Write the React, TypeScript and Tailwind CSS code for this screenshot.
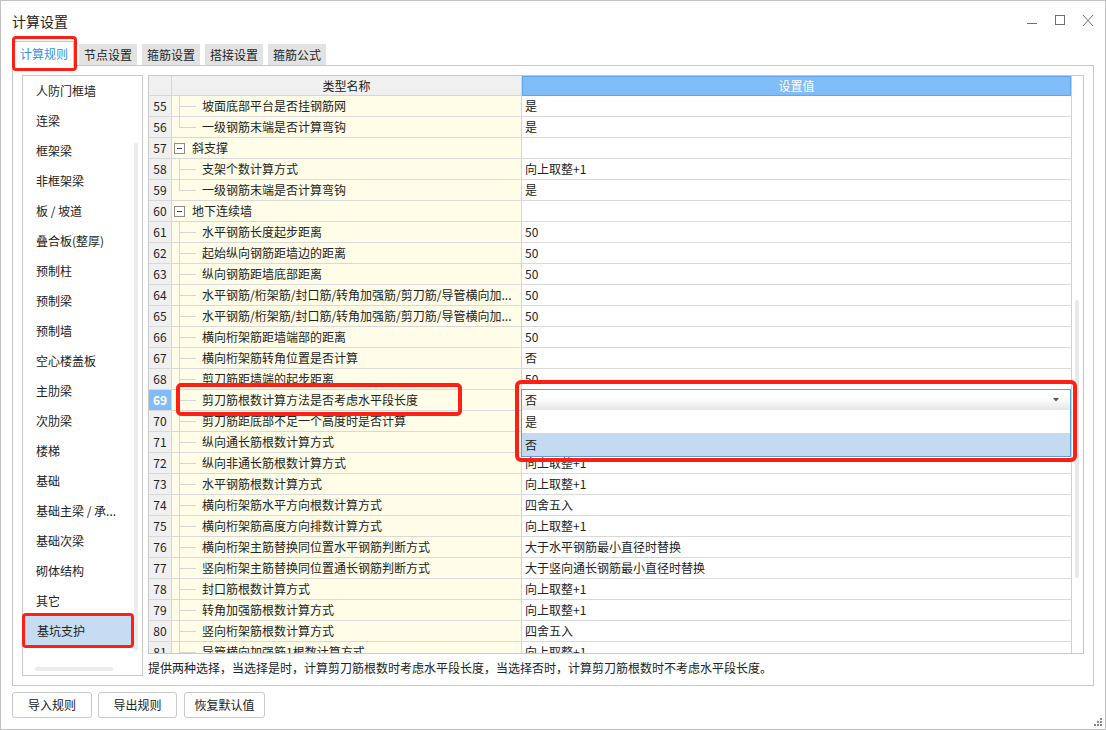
import React from 'react';

type RowData = {
	n: number;
	name: string;
	value: string;
	group?: boolean;
	last?: boolean;
};

// values of rows 70/71 sit under the open dropdown, so they are left empty
const rows: RowData[] = [
	{ n: 55, name: '坡面底部平台是否挂钢筋网', value: '是' },
	{ n: 56, name: '一级钢筋末端是否计算弯钩', value: '是', last: true },
	{ n: 57, name: '斜支撑', value: '', group: true },
	{ n: 58, name: '支架个数计算方式', value: '向上取整+1' },
	{ n: 59, name: '一级钢筋末端是否计算弯钩', value: '是', last: true },
	{ n: 60, name: '地下连续墙', value: '', group: true },
	{ n: 61, name: '水平钢筋长度起步距离', value: '50' },
	{ n: 62, name: '起始纵向钢筋距墙边的距离', value: '50' },
	{ n: 63, name: '纵向钢筋距墙底部距离', value: '50' },
	{ n: 64, name: '水平钢筋/桁架筋/封口筋/转角加强筋/剪刀筋/导管横向加...', value: '50' },
	{ n: 65, name: '水平钢筋/桁架筋/封口筋/转角加强筋/剪刀筋/导管横向加...', value: '50' },
	{ n: 66, name: '横向桁架筋距墙端部的距离', value: '50' },
	{ n: 67, name: '横向桁架筋转角位置是否计算', value: '否' },
	{ n: 68, name: '剪刀筋距墙端的起步距离', value: '50' },
	{ n: 69, name: '剪刀筋根数计算方法是否考虑水平段长度', value: '' },
	{ n: 70, name: '剪刀筋距底部不足一个高度时是否计算', value: '' },
	{ n: 71, name: '纵向通长筋根数计算方式', value: '' },
	{ n: 72, name: '纵向非通长筋根数计算方式', value: '向上取整+1' },
	{ n: 73, name: '水平钢筋根数计算方式', value: '向上取整+1' },
	{ n: 74, name: '横向桁架筋水平方向根数计算方式', value: '四舍五入' },
	{ n: 75, name: '横向桁架筋高度方向排数计算方式', value: '向上取整+1' },
	{ n: 76, name: '横向桁架主筋替换同位置水平钢筋判断方式', value: '大于水平钢筋最小直径时替换' },
	{ n: 77, name: '竖向桁架主筋替换同位置通长钢筋判断方式', value: '大于竖向通长钢筋最小直径时替换' },
	{ n: 78, name: '封口筋根数计算方式', value: '向上取整+1' },
	{ n: 79, name: '转角加强筋根数计算方式', value: '向上取整+1' },
	{ n: 80, name: '竖向桁架筋根数计算方式', value: '四舍五入' },
	{ n: 81, name: '导管横向加强筋1根数计算方式', value: '向上取整+1' },
];

const listItems = [
	'人防门框墙',
	'连梁',
	'框架梁',
	'非框架梁',
	'板 / 坡道',
	'叠合板(整厚)',
	'预制柱',
	'预制梁',
	'预制墙',
	'空心楼盖板',
	'主肋梁',
	'次肋梁',
	'楼梯',
	'基础',
	'基础主梁 / 承...',
	'基础次梁',
	'砌体结构',
	'其它',
	'基坑支护',
];

const tabs = ['计算规则', '节点设置', '箍筋设置', '搭接设置', '箍筋公式'];

const WindowControls = () => (
	<svg width="70" height="16" viewBox="0 0 70 16" className="ml-auto mr-[10px]" fill="none" stroke="#6f6f6f" strokeWidth="1">
		<path d="M2 10.5H12" />
		<rect x="30.5" y="2.5" width="9" height="9" />
		<path d="M58 2L68 13M68 2L58 13" />
	</svg>
);

const Grip = () => (
	<svg width="9" height="9" viewBox="0 0 9 9" fill="#8a8a8a">
		<rect x="7" y="1" width="2" height="2" />
		<rect x="4" y="4" width="2" height="2" />
		<rect x="7" y="4" width="2" height="2" />
		<rect x="1" y="7" width="2" height="2" />
		<rect x="4" y="7" width="2" height="2" />
		<rect x="7" y="7" width="2" height="2" />
	</svg>
);

const NameCell = ({ r }: { r: RowData }) => {
	if (r.group) {
		return (
			<div className="w-[350px] shrink-0 border-r border-[#d6d6d6] bg-[#fffde8] flex items-center pl-[2px]">
				<div className="w-[11px] h-[11px] border border-[#8c8c8c] bg-white flex items-center justify-center">
					<div className="w-[5px] h-px bg-[#444]" />
				</div>
				<span className="ml-[7px] whitespace-nowrap">{r.name}</span>
			</div>
		);
	}
	return (
		<div className="w-[350px] shrink-0 border-r border-[#d6d6d6] bg-[#fffde8] flex items-center overflow-hidden">
			<div className="relative w-[30px] h-full shrink-0">
				<div className={`absolute left-[7px] top-0 w-px bg-[#d6d6d6] ${r.last ? 'h-[10px]' : 'h-[21px]'}`} />
				<div className="absolute left-[7px] top-[10px] w-[17px] h-px bg-[#d6d6d6]" />
			</div>
			<span className="whitespace-nowrap">{r.name}</span>
		</div>
	);
};

const Row = ({ r }: { r: RowData }) => {
	const sel = r.n === 69;
	return (
		<div className="flex h-[21px] shrink-0 border-b border-[#d9d9d9]">
			<div
				className={`w-[23px] shrink-0 border-r border-[#d6d6d6] flex items-center justify-center ${
					sel ? 'bg-[#80bcf8] text-white font-bold' : 'bg-[#f0f0f0]'
				}`}
			>
				{r.n}
			</div>
			<NameCell r={r} />
			<div className="flex-1 bg-white flex items-center pl-[3px] whitespace-nowrap">{r.value}</div>
		</div>
	);
};

export default function App() {
	return (
		<div className="relative w-[1106px] h-[730px] bg-white border border-[#c2c2c2] flex flex-col text-[12px] leading-[16px] text-[#222] font-['Noto_Sans_CJK_SC',sans-serif]">
			{/* title bar */}
			<div className="h-[40px] flex items-center pl-[11px] shrink-0">
				<span className="text-[14px]">计算设置</span>
				<WindowControls />
			</div>

			{/* tabs */}
			<div className="flex items-end h-[24px] pl-[13px] gap-[5px] shrink-0 relative z-10">
				{tabs.map((t, i) =>
					i === 0 ? (
						<div
							key={t}
							className="w-[60px] h-[25px] -mb-px bg-white border border-b-0 border-[#c9c9c9] text-[#3a8ee8] flex items-center justify-center"
						>
							{t}
						</div>
					) : (
						<div key={t} className="w-[58px] h-[21px] bg-[#e2e2e2] flex items-center justify-center">
							{t}
						</div>
					),
				)}
			</div>

			{/* panel */}
			<div className="mx-[11px] h-[621px] shrink-0 border border-[#c9c9c9] p-[9px] flex gap-[5px]">
				{/* left list */}
				<div className="relative w-[121px] h-[601px] shrink-0 border border-[#c9c9c9] overflow-hidden">
					<div className="flex flex-col">
						{listItems.map((it, i) => (
							<div
								key={it}
								className={`h-[30px] shrink-0 flex items-center pl-[13px] whitespace-nowrap ${
									i === listItems.length - 1 ? 'ml-px w-[108px] pl-[12px] bg-[#c5dcf2]' : 'w-[109px]'
								}`}
							>
								{it}
							</div>
						))}
					</div>
					<div className="absolute left-[111px] top-[67px] w-[4px] h-[508px] rounded-full bg-[#ececec]" />
					<div className="absolute left-[12px] top-[591px] w-[78px] h-[4px] rounded-full bg-[#ececec]" />
				</div>

				{/* right column */}
				<div className="flex flex-col w-[936px] shrink-0">
					<div className="h-[579px] border border-[#c9c9c9] flex overflow-hidden shrink-0">
						<div className="w-[922px] shrink-0 flex flex-col overflow-hidden">
							<div className="flex h-[20px] shrink-0">
								<div className="w-[23px] shrink-0 bg-[#f0f0f0] border-r border-b border-[#d6d6d6]" />
								<div className="w-[350px] shrink-0 bg-[#f0f0f0] border-r border-b border-[#d6d6d6] flex items-center justify-center">
									类型名称
								</div>
								<div className="flex-1 bg-[#80bcf8] border border-[#62a6f0] text-white flex items-center justify-center">
									设置值
								</div>
							</div>
							{rows.map(r => (
								<Row key={r.n} r={r} />
							))}
						</div>
						<div className="flex-1 border-l border-[#d0d0d0] pl-[3px]">
							<div className="mt-[224px] w-[4px] h-[278px] rounded-full bg-[#e8e8e8]" />
						</div>
					</div>
					<div className="mt-[6px] whitespace-nowrap">
						提供两种选择，当选择是时，计算剪刀筋根数时考虑水平段长度，当选择否时，计算剪刀筋根数时不考虑水平段长度。
					</div>
				</div>
			</div>

			{/* bottom buttons */}
			<div className="flex mt-[6px] pl-[11px] shrink-0">
				<button className="w-[80px] h-[26px] border border-[#c9c9c9] rounded-[3px] bg-white">导入规则</button>
				<button className="ml-[6px] w-[79px] h-[26px] border border-[#c9c9c9] rounded-[3px] bg-white">导出规则</button>
				<button className="ml-[7px] w-[81px] h-[26px] border border-[#c9c9c9] rounded-[3px] bg-white">恢复默认值</button>
			</div>

			<div className="absolute right-[3px] bottom-[3px]">
				<Grip />
			</div>

			{/* dropdown editor on row 69 */}
			<div className="absolute left-[520px] top-[388px] w-[550px] h-[22px] border border-[#5aa0de] bg-gradient-to-b from-white from-40% to-[#e6e6e6] flex items-center pl-[3px] z-20">
				否
				<svg width="6" height="4" viewBox="0 0 6 4" className="ml-auto mr-[11px]">
					<path d="M0 0H6L3 3.5Z" fill="#555" />
				</svg>
			</div>
			<div className="absolute left-[520px] top-[409px] w-[550px] h-[47px] border border-t-0 border-[#5aa0de] bg-white flex flex-col z-20">
				<div className="h-[23px] flex items-center pl-[3px]">是</div>
				<div className="h-[23px] flex items-center pl-[3px] bg-[#c4daf0]">否</div>
			</div>

			{/* red highlight boxes */}
			<div className="absolute left-[11px] top-[35px] w-[65px] h-[35px] border-[3px] border-[#ff2015] rounded-[4px] z-30" />
			<div className="absolute left-[21px] top-[612px] w-[112px] h-[35px] border-[3px] border-[#ff2015] rounded-[4px] z-30" />
			<div className="absolute left-[175px] top-[382px] w-[286px] h-[33px] border-[4px] border-[#ff2015] rounded-[5px] z-30" />
			<div className="absolute left-[514px] top-[379px] w-[562px] h-[82px] border-[4px] border-[#ff2015] rounded-[6px] z-30" />
		</div>
	);
}
